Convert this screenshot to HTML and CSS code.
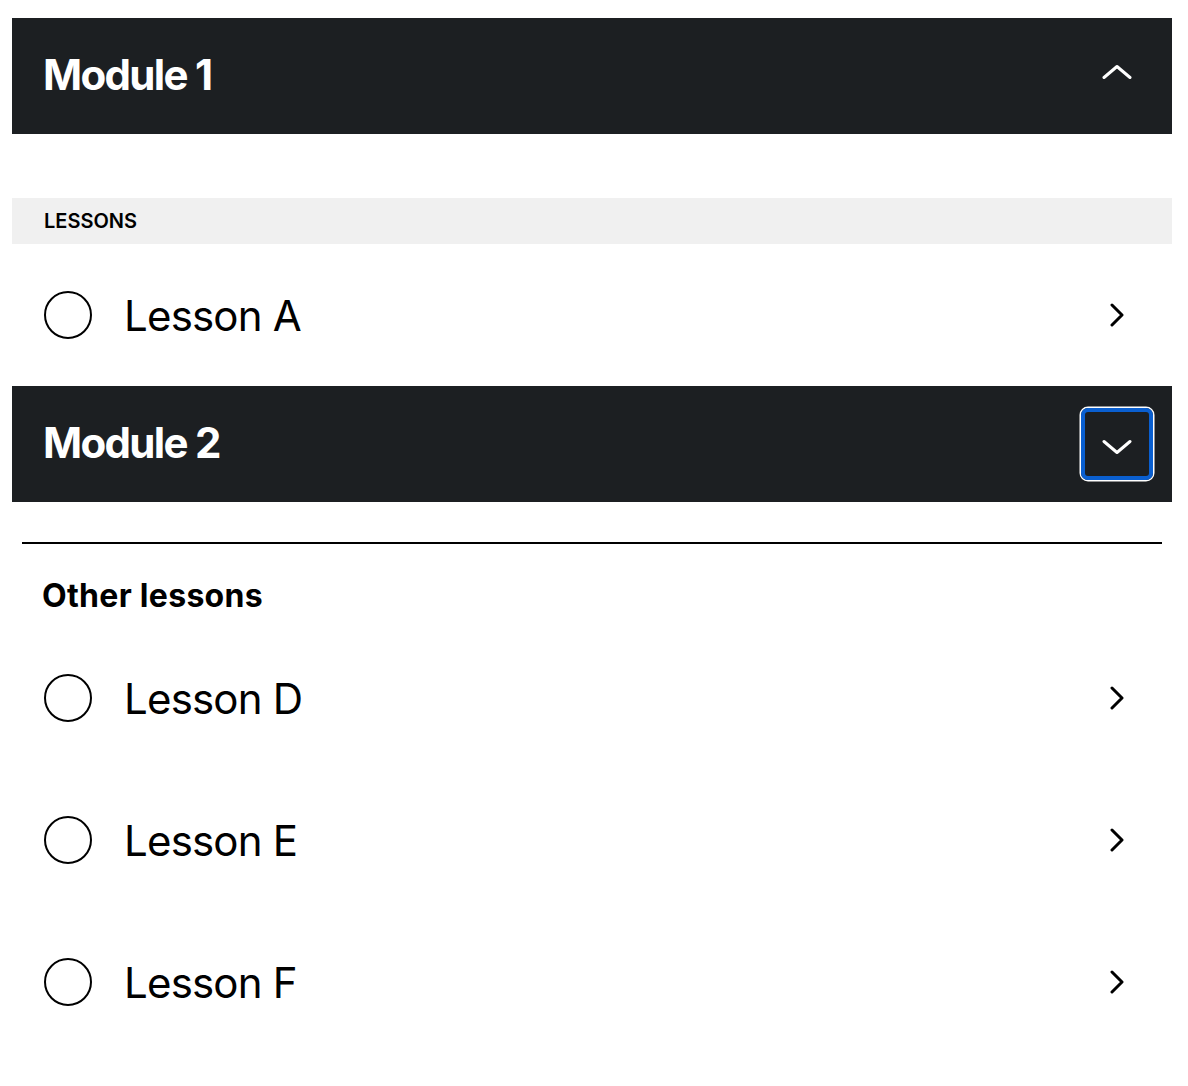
FILE: index.html
```html
<!DOCTYPE html>
<html lang="en">
<head>
<meta charset="UTF-8" />
<meta name="viewport" content="width=device-width, initial-scale=1" />
<title>Course modules</title>
<link rel="stylesheet" href="styles.css">
</head>
<body>
  <div class="course">

    <!-- Module 1 (open) -->
    <section class="module">
      <div class="module-head">
        <h2>Module 1</h2>
        <button class="toggle" aria-expanded="true" aria-label="Collapse Module 1">
          <svg width="30" height="24" viewBox="0 0 30 24"><path d="M2 13.5 L15 2.5 L28 13.5" fill="none" stroke="currentColor" stroke-width="3" stroke-linecap="round" stroke-linejoin="round"/></svg>
        </button>
      </div>
      <div class="module-body">
        <div class="group-label">LESSONS</div>
        <a class="lesson" href="#">
          <span class="status"></span>
          <span class="lesson-name">Lesson A</span>
          <svg class="go" width="14" height="24" viewBox="0 0 14 24"><path d="M2 2 L12 12 L2 22" fill="none" stroke="currentColor" stroke-width="3" stroke-linecap="round" stroke-linejoin="round"/></svg>
        </a>
      </div>
    </section>

    <!-- Module 2 (toggle focused) -->
    <section class="module">
      <div class="module-head">
        <h2>Module 2</h2>
        <button class="toggle focused" aria-expanded="false" aria-label="Expand Module 2">
          <svg width="30" height="24" viewBox="0 0 30 24"><path d="M2 9.5 L15 20.5 L28 9.5" fill="none" stroke="currentColor" stroke-width="3" stroke-linecap="round" stroke-linejoin="round"/></svg>
        </button>
      </div>
      <div class="module-body">
        <hr class="divider" />
        <h3 class="group-title">Other lessons</h3>
        <a class="lesson" href="#">
          <span class="status"></span>
          <span class="lesson-name">Lesson D</span>
          <svg class="go" width="14" height="24" viewBox="0 0 14 24"><path d="M2 2 L12 12 L2 22" fill="none" stroke="currentColor" stroke-width="3" stroke-linecap="round" stroke-linejoin="round"/></svg>
        </a>
        <a class="lesson" href="#">
          <span class="status"></span>
          <span class="lesson-name">Lesson E</span>
          <svg class="go" width="14" height="24" viewBox="0 0 14 24"><path d="M2 2 L12 12 L2 22" fill="none" stroke="currentColor" stroke-width="3" stroke-linecap="round" stroke-linejoin="round"/></svg>
        </a>
        <a class="lesson" href="#">
          <span class="status"></span>
          <span class="lesson-name">Lesson F</span>
          <svg class="go" width="14" height="24" viewBox="0 0 14 24"><path d="M2 2 L12 12 L2 22" fill="none" stroke="currentColor" stroke-width="3" stroke-linecap="round" stroke-linejoin="round"/></svg>
        </a>
      </div>
    </section>

  </div>
</body>
</html>
```

FILE: styles.css
```css
/* --- Reset and basics --- */
* {
  box-sizing: border-box;
  margin: 0;
  padding: 0;
}
body {
  font-family: Inter, 'Noto Sans', sans-serif;
  background: #fff;
  color: #000;
}
.course {
  padding: 18px 16px 18px 12px;
}

/* --- Module header bar --- */
.module-head {
  display: flex;
  align-items: center;
  justify-content: space-between;
  height: 116px;
  padding: 0 19px 0 31px;
  background: #1c1f22;
  color: #fff;
}
.module-head h2 {
  font-size: 42px;
  font-weight: 700;
  letter-spacing: -1.7px;
  margin-top: -3px;
}
.toggle {
  display: flex;
  align-items: center;
  justify-content: center;
  width: 72px;
  height: 72px;
  border: none;
  border-radius: 7px;
  background: transparent;
  color: #fff;
  cursor: pointer;
}
.toggle.focused {
  border: 4px solid #0a5fd0;
  box-shadow: 0 0 0 1.5px #fff;
}

/* --- Module contents --- */
.module-body {
  padding-top: 64px;
}
.module-body:has(.divider) {
  padding-top: 40px;
}
.group-label {
  height: 46px;
  display: flex;
  align-items: center;
  padding-left: 32px;
  background: #f0f0f0;
  font-size: 20px;
  font-weight: 600;
}
.divider {
  border: none;
  border-top: 2px solid #000;
  margin: 0 10px;
}
.group-title {
  font-size: 32px;
  line-height: 40px;
  font-weight: 700;
  letter-spacing: 0.3px;
  padding: 32px 30px 11px;
}

/* --- Lesson rows --- */
.lesson {
  display: flex;
  align-items: center;
  height: 142px;
  padding: 0 48px 0 32px;
  color: #000;
  text-decoration: none;
}
.status {
  width: 48px;
  height: 48px;
  border: 2px solid #000;
  border-radius: 50%;
  flex: none;
}
.lesson-name {
  margin-left: 32px;
  flex: 1;
  font-size: 42px;
  font-weight: 400;
  letter-spacing: -0.8px;
}
.go {
  flex: none;
}
```
